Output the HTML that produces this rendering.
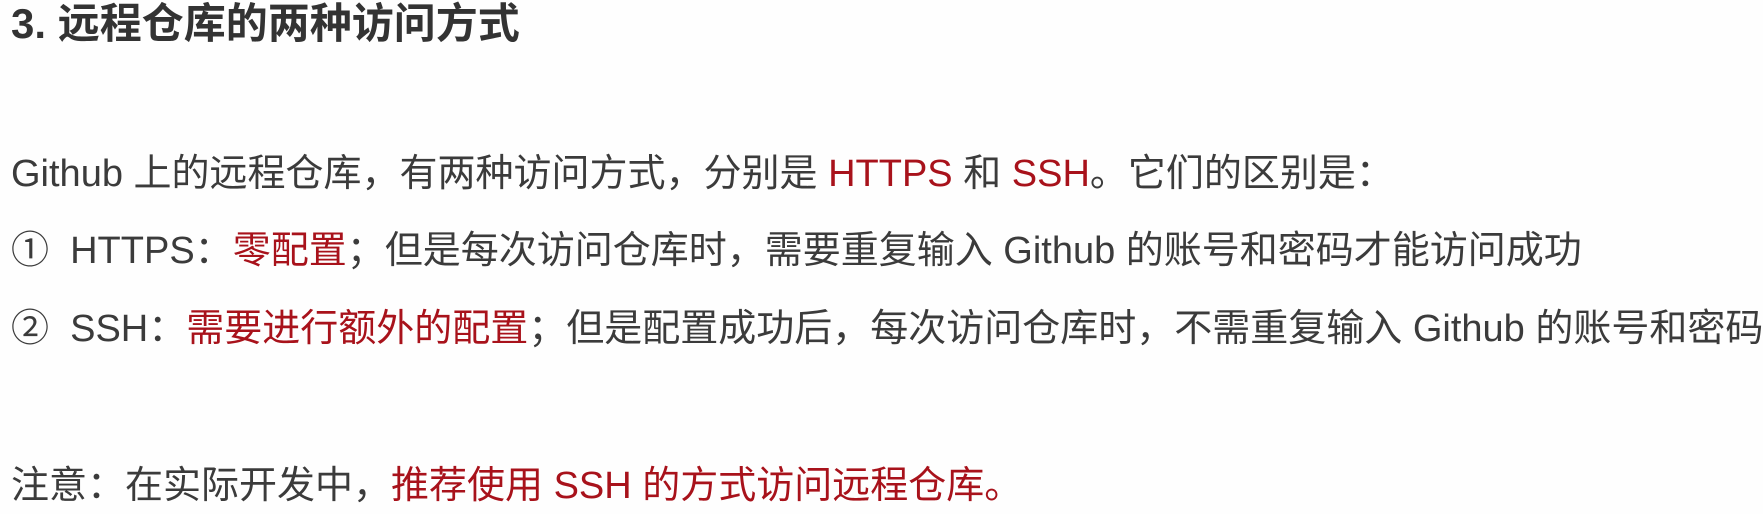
<!DOCTYPE html>
<html><head><meta charset="utf-8"><style>
html,body{margin:0;padding:0;background:#fefefe;width:1763px;height:514px;overflow:hidden}
.l{position:absolute;left:11px;white-space:nowrap;font-family:"Liberation Sans","Noto Sans CJK SC",sans-serif;color:#3b3b3b;font-size:38px;line-height:44px}
.h{font-weight:bold;font-size:42px;color:#333}
.r{color:#a8121b}
</style></head><body>
<div class="l h" style="top:2px">3. 远程仓库的两种访问方式</div>
<div class="l" style="top:152px">Github 上的远程仓库，有两种访问方式，分别是 <span class="r">HTTPS</span> 和 <span class="r">SSH</span>。它们的区别是：</div>
<div class="l" style="top:229px">①&nbsp; HTTPS：<span class="r">零配置</span>；但是每次访问仓库时，需要重复输入 Github 的账号和密码才能访问成功</div>
<div class="l" style="top:307px">②&nbsp; SSH：<span class="r">需要进行额外的配置</span>；但是配置成功后，每次访问仓库时，不需重复输入 Github 的账号和密码</div>
<div class="l" style="top:464px">注意：在实际开发中，<span class="r">推荐使用 SSH 的方式访问远程仓库。</span></div>
</body></html>
